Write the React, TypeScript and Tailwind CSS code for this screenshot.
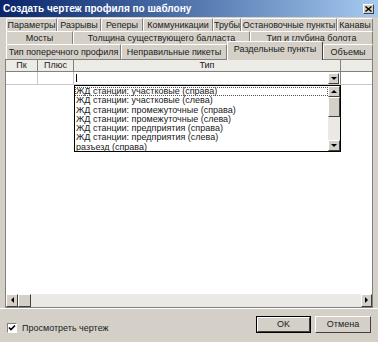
import React from "react";

const raised =
  "border border-t-white border-l-white border-r-[#404040] border-b-[#404040]";

const Arrow = ({ dir }: { dir: "up" | "down" | "left" | "right" }) => {
  const pts = {
    up: "1,4 4,1 7,4",
    down: "1,1 4,4 7,1",
    left: "4,0 1,3 4,6",
    right: "1,0 4,3 1,6",
  }[dir];
  const vertical = dir === "up" || dir === "down";
  return (
    <svg
      width={vertical ? 8 : 5}
      height={vertical ? 5 : 7}
      viewBox={vertical ? "0 0 8 5" : "0 0 5 7"}
    >
      <polygon points={pts} fill="#000" />
    </svg>
  );
};

const ScrollBtn = ({
  dir,
  className,
}: {
  dir: "up" | "down" | "left" | "right";
  className: string;
}) => (
  <div
    className={`${className} bg-[#d4d0c8] ${raised} flex items-center justify-center`}
  >
    <Arrow dir={dir} />
  </div>
);

type TabDef = { label: string; w: number; active?: boolean };

const rows: { h: number; tabs: TabDef[] }[] = [
  {
    h: 13,
    tabs: [
      { label: "Параметры", w: 51 },
      { label: "Разрывы", w: 44 },
      { label: "Реперы", w: 42 },
      { label: "Коммуникации", w: 70 },
      { label: "Трубы", w: 28 },
      { label: "Остановочные пункты", w: 96 },
      { label: "Канавы", w: 36 },
    ],
  },
  {
    h: 13,
    tabs: [
      { label: "Мосты", w: 67 },
      { label: "Толщина существующего балласта", w: 177 },
      { label: "Тип и глубина болота", w: 123 },
    ],
  },
  {
    h: 15,
    tabs: [
      { label: "Тип поперечного профиля", w: 115 },
      { label: "Неправильные пикеты", w: 106 },
      { label: "Раздельные пункты", w: 96, active: true },
      { label: "Объемы", w: 50 },
    ],
  },
];

const items = [
  "ЖД станции: участковые (справа)",
  "ЖД станции: участковые (слева)",
  "ЖД станции: промежуточные (справа)",
  "ЖД станции: промежуточные (слева)",
  "ЖД станции: предприятия (справа)",
  "ЖД станции: предприятия (слева)",
  "разъезд (справа)",
];

const Tabs = () => (
  <div className="mt-px flex flex-col pl-[6px]">
    {rows.map((row, ri) => (
      <div key={ri} className="flex" style={{ height: row.h }}>
        {row.tabs.map((t) => (
          <div
            key={t.label}
            style={{ width: t.w }}
            className={
              t.active
                ? "relative z-10 -mt-[3px] h-[19px] pb-[3px] bg-[#d4d0c8] border-t border-l border-r border-t-white border-l-white border-r-[#404040] rounded-t-[2px] flex items-center justify-center whitespace-nowrap"
                : "h-full border-t border-l border-r border-t-white border-l-white border-r-[#808080] rounded-t-[2px] flex items-center justify-center whitespace-nowrap"
            }
          >
            {t.label}
          </div>
        ))}
      </div>
    ))}
  </div>
);

const Grid = () => (
  <div className="relative ml-[5px] w-[368px] h-[249px] bg-white border border-[#808080] flex flex-col">
    <div className="flex h-[11px] bg-[#ecebe6]">
      <div className="w-[32px] border-r border-[#808080] flex items-center justify-center">
        Пк
      </div>
      <div className="w-[36px] border-r border-[#808080] flex items-center justify-center">
        Плюс
      </div>
      <div className="w-[267px] border-r border-[#808080] flex items-center justify-center">
        Тип
      </div>
      <div className="flex-1" />
    </div>
    <div className="flex h-[14px] border-t border-b border-[#808080] border-b-[#c8c8c8]">
      <div className="w-[32px] border-r border-[#c8c8c8]" />
      <div className="w-[36px] border-r border-[#c8c8c8]" />
      <div className="w-[267px] border-r border-[#808080] flex items-center pr-px">
        <div className="ml-[2px] w-px h-[8px] bg-black" />
        <ScrollBtn dir="down" className="ml-auto w-[11px] h-[11px]" />
      </div>
      <div className="flex-1" />
    </div>
    <div className="flex-1" />
    <div className="flex h-[13px] bg-[#ebe9e5]">
      <ScrollBtn dir="left" className="w-[12px] h-full" />
      <div className={`w-[13px] h-full bg-[#d4d0c8] ${raised}`} />
      <div className="flex-1" />
      <ScrollBtn dir="right" className="w-[11px] h-full" />
    </div>

    {/* open drop-down of the Тип combo */}
    <div className="absolute left-[68px] top-[25px] w-[267px] h-[67px] bg-white border border-black flex">
      <div className="flex-1 pt-px flex flex-col">
        {items.map((it, i) => (
          <div
            key={it}
            className={`h-[9.25px] leading-[9.25px] pl-px whitespace-nowrap ${
              i === 0 ? "outline outline-1 outline-dotted outline-[#555] -outline-offset-1" : ""
            }`}
          >
            {it}
          </div>
        ))}
      </div>
      <div className="w-[12px] bg-[#ebe9e5] flex flex-col">
        <ScrollBtn dir="up" className="w-[12px] h-[11px]" />
        <div className={`w-[12px] h-[20px] bg-[#d4d0c8] ${raised}`} />
        <div className="flex-1" />
        <ScrollBtn dir="down" className="w-[12px] h-[11px]" />
      </div>
    </div>
  </div>
);

const Footer = () => (
  <div className="border-t border-white flex items-start">
    <div className="ml-[7px] mt-[14px] flex items-center">
      <div className="w-[10px] h-[10px] bg-white border border-t-[#808080] border-l-[#808080] border-r-white border-b-white flex items-center justify-center">
        <svg width="8" height="8" viewBox="0 0 8 8">
          <polyline points="1,3.5 3,5.5 7,1.5" fill="none" stroke="#000" strokeWidth="1.6" />
        </svg>
      </div>
      <span className="ml-[5px]">Просмотреть чертеж</span>
    </div>
    <div className="ml-auto mr-[7px] mt-[7px] flex gap-[4px]">
      <div className="w-[55px] h-[17px] border border-black">
        <div className={`h-full bg-[#d4d0c8] ${raised} flex items-center justify-center`}>
          OK
        </div>
      </div>
      <div className={`w-[56px] h-[17px] bg-[#d4d0c8] ${raised} flex items-center justify-center`}>
        Отмена
      </div>
    </div>
  </div>
);

export default function App() {
  return (
    <div className="w-[378px] h-[342px] overflow-hidden bg-[#d4d0c8] text-[#202020] text-[9px] leading-none font-['Liberation_Sans',sans-serif]">
      <div className="h-[17px] bg-linear-to-r from-[#0a246a] to-[#a6caf0] flex items-center pl-[3px] pr-[4px]">
        <span className="text-white font-bold text-[10px]">
          Создать чертеж профиля по шаблону
        </span>
        <div className={`ml-auto w-[11px] h-[10px] bg-[#d4d0c8] ${raised} flex items-center justify-center`}>
          <svg width="7" height="6" viewBox="0 0 7 6">
            <path d="M0.5 0.5 L6.5 5.5 M6.5 0.5 L0.5 5.5" stroke="#000" strokeWidth="1.4" />
          </svg>
        </div>
      </div>
      <Tabs />
      <Grid />
      <Footer />
    </div>
  );
}
